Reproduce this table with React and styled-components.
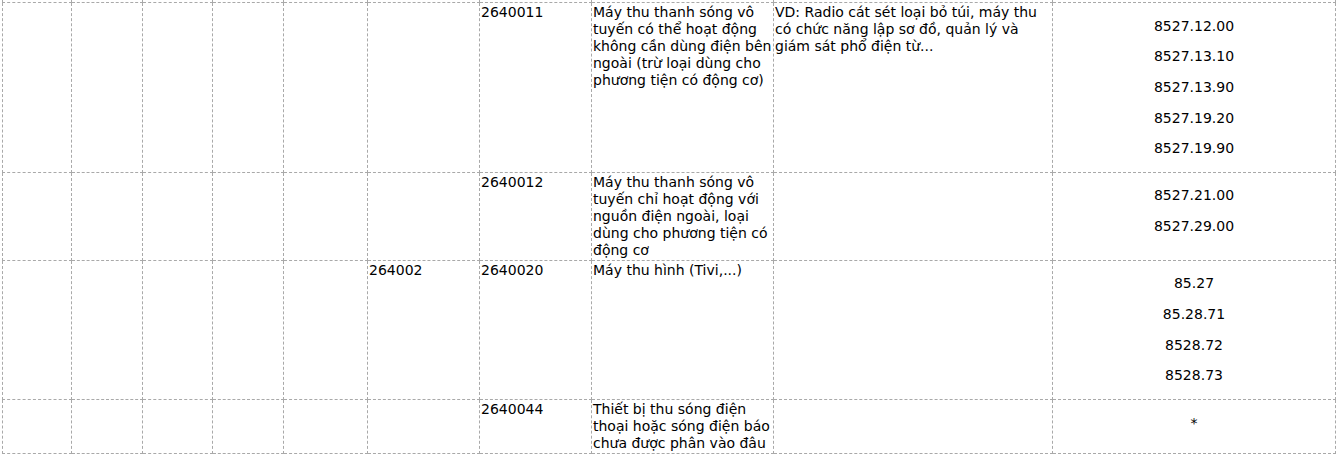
import React from 'react';
import styled, { createGlobalStyle } from 'styled-components';

const GlobalStyle = createGlobalStyle`
  html, body {
    margin: 0;
    padding: 0;
    background: #fff;
    overflow: hidden;
  }
  body {
    font-family: "DejaVu Sans", Verdana, sans-serif;
    font-size: 14px;
    color: #000;
  }
`;

const Page = styled.div`
  height: 454px;
  overflow: hidden;
  padding-left: 2px;
`;

const Table = styled.table`
  border-collapse: collapse;
  table-layout: fixed;
  width: 1334px;
  margin-top: -18px;
`;

const Col = styled.col`
  width: ${(p) => p.$w}px;
`;

const Cell = styled.td`
  border: 1px dashed #a9a9a9;
  padding: 1px;
  vertical-align: top;
  line-height: 17px;
  text-align: ${(p) => (p.$center ? 'center' : 'left')};
  overflow: hidden;
`;

const Note = styled.div`
  max-width: 270px;
`;

const Code = styled.p`
  margin: 13.65px 0;
`;

const widths = [69, 71, 70, 71, 84, 112, 112, 182, 279, 283];

const rows = [
  {
    group: '',
    id: '',
    name: 'thiết bị vô tuyến khác',
    note: 'dùng trong gia đình, loại xách tay',
    codes: null
  },
  {
    group: '',
    id: '2640011',
    name: 'Máy thu thanh sóng vô tuyến có thể hoạt động không cần dùng điện bên ngoài (trừ loại dùng cho phương tiện có động cơ)',
    note: 'VD: Radio cát sét loại bỏ túi, máy thu có chức năng lập sơ đồ, quản lý và giám sát phổ điện từ...',
    codes: ['8527.12.00', '8527.13.10', '8527.13.90', '8527.19.20', '8527.19.90']
  },
  {
    group: '',
    id: '2640012',
    name: 'Máy thu thanh sóng vô tuyến chỉ hoạt động với nguồn điện ngoài, loại dùng cho phương tiện có động cơ',
    note: '',
    codes: ['8527.21.00', '8527.29.00']
  },
  {
    group: '264002',
    id: '2640020',
    name: 'Máy thu hình (Tivi,...)',
    note: '',
    codes: ['85.27', '85.28.71', '8528.72', '8528.73']
  },
  {
    group: '',
    id: '2640044',
    name: 'Thiết bị thu sóng điện thoại hoặc sóng điện báo chưa được phân vào đâu',
    note: '',
    codes: ['*']
  }
];

function CodeRow({ row }) {
  return (
    <tr>
      <Cell />
      <Cell />
      <Cell />
      <Cell />
      <Cell />
      <Cell>{row.group}</Cell>
      <Cell>{row.id}</Cell>
      <Cell>{row.name}</Cell>
      <Cell>{row.note && <Note>{row.note}</Note>}</Cell>
      <Cell $center>
        {row.codes && row.codes.map((c) => <Code key={c}>{c}</Code>)}
      </Cell>
    </tr>
  );
}

export default function App() {
  return (
    <Page>
      <GlobalStyle />
      <Table>
        <colgroup>
          {widths.map((w, i) => (
            <Col key={i} $w={w} />
          ))}
        </colgroup>
        <tbody>
          {rows.map((row, i) => (
            <CodeRow key={i} row={row} />
          ))}
        </tbody>
      </Table>
    </Page>
  );
}
